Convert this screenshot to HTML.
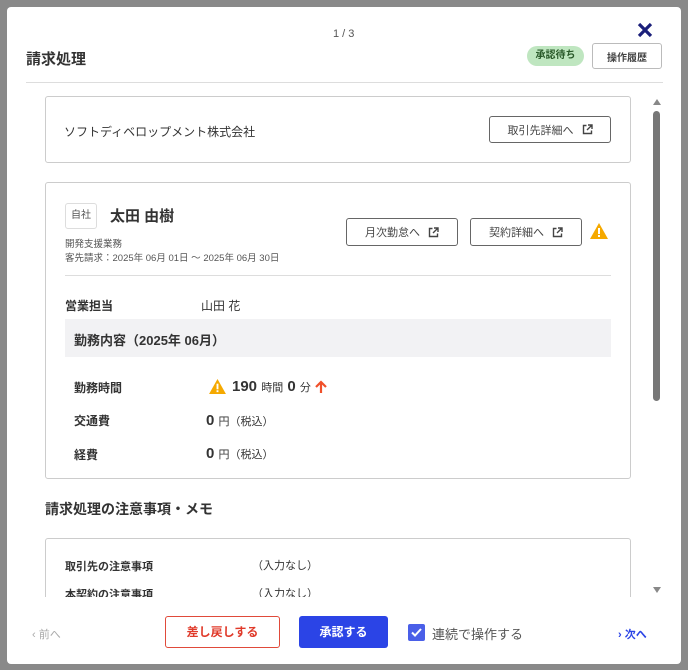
<!DOCTYPE html>
<html><head><meta charset="utf-8"><style>
*{box-sizing:border-box;margin:0;padding:0}
body{width:688px;height:670px;background:#898989;font-family:"Liberation Sans","Noto Sans CJK JP",sans-serif;color:#333;position:relative;overflow:hidden}
.a{position:absolute}
.modal{left:7px;top:7px;width:674px;height:657px;background:#fff;border-radius:4px}
.btn{position:absolute;border:1px solid #666;border-radius:3px;background:#fff;font-size:11px;color:#444;display:flex;align-items:center;justify-content:center;gap:8px}
.box{position:absolute;border:1px solid #ccc;border-radius:3px;background:#fff}
.b{font-weight:bold}
</style></head><body>
<div class="a modal">
  <div class="a" style="left:326px;top:21px;font-size:11px;color:#555">1 / 3</div>
  <svg class="a" style="left:630px;top:15px" width="16" height="16" viewBox="0 0 16 16"><path d="M2 2L14 14M14 2L2 14" stroke="#1b1f7a" stroke-width="3.2"/></svg>
  <div class="a b" style="left:19px;top:41px;font-size:15px;color:#333">請求処理</div>
  <div class="a b" style="left:520px;top:39px;width:57px;height:20px;background:#bfe6c0;border-radius:10px;font-size:10px;color:#2a5a2a;text-align:center;line-height:20px">承認待ち</div>
  <div class="btn b" style="left:585px;top:36px;width:70px;height:26px;border-color:#bbb;font-size:10px">操作履歴</div>
  <div class="a" style="left:19px;top:75px;width:637px;height:1px;background:#ddd"></div>

  <div class="a" style="left:0;top:83px;width:674px;height:507px;overflow:hidden">
    <div class="box" style="left:38px;top:6px;width:586px;height:67px"></div>
    <div class="a" style="left:57px;top:33px;font-size:12px">ソフトディベロップメント株式会社</div>
    <div class="btn" style="left:482px;top:26px;width:122px;height:27px">取引先詳細へ <svg width="11" height="11" viewBox="0 0 11 11"><path d="M4.5 1.5H1.5V9.5H9.5V6.5M6 1H10V5M10 1L5 6" stroke="#444" stroke-width="1.4" fill="none"/></svg></div>

    <div class="box" style="left:38px;top:92px;width:586px;height:297px"></div>
    <div class="a" style="left:58px;top:113px;width:32px;height:26px;border:1px solid #ddd;border-radius:3px;font-size:10px;text-align:center;line-height:24px;color:#555">自社</div>
    <div class="a b" style="left:103px;top:115px;font-size:15px">太田 由樹</div>
    <div class="a" style="left:58px;top:146px;font-size:9.5px;color:#555">開発支援業務</div>
    <div class="a" style="left:58px;top:160px;font-size:9.5px;color:#555">客先請求：2025年 06月 01日 ～ 2025年 06月 30日</div>
    <div class="btn" style="left:339px;top:128px;width:112px;height:28px">月次勤怠へ <svg width="11" height="11" viewBox="0 0 11 11"><path d="M4.5 1.5H1.5V9.5H9.5V6.5M6 1H10V5M10 1L5 6" stroke="#444" stroke-width="1.4" fill="none"/></svg></div>
    <div class="btn" style="left:463px;top:128px;width:112px;height:28px">契約詳細へ <svg width="11" height="11" viewBox="0 0 11 11"><path d="M4.5 1.5H1.5V9.5H9.5V6.5M6 1H10V5M10 1L5 6" stroke="#444" stroke-width="1.4" fill="none"/></svg></div>
    <svg class="a" style="left:583px;top:133px" width="18" height="16" viewBox="0 0 18 16"><path d="M9 0L18 16H0Z" fill="#f5a900"/><rect x="8" y="5" width="2" height="6" fill="#fff"/><rect x="8" y="12" width="2" height="2" fill="#fff"/></svg>
    <div class="a" style="left:58px;top:185px;width:546px;height:1px;background:#ddd"></div>
    <div class="a b" style="left:58px;top:207px;font-size:12px">営業担当</div>
    <div class="a" style="left:194px;top:207px;font-size:12px">山田 花</div>
    <div class="a" style="left:58px;top:229px;width:546px;height:38px;background:#f2f2f4"></div>
    <div class="a b" style="left:67px;top:240px;font-size:13px">勤務内容（2025年 06月）</div>
    <div class="a b" style="left:67px;top:289px;font-size:12px">勤務時間</div>
    <svg class="a" style="left:202px;top:289px" width="17" height="15" viewBox="0 0 18 16"><path d="M9 0L18 16H0Z" fill="#f5a900"/><rect x="8" y="5" width="2" height="6" fill="#fff"/><rect x="8" y="12" width="2" height="2" fill="#fff"/></svg>
    <div class="a" style="left:225px;top:288px;font-size:15px;color:#333"><b>190</b> <span style="font-size:11px">時間</span> <b>0</b> <span style="font-size:11px">分</span></div>
    <svg class="a" style="left:307px;top:290px" width="14" height="14" viewBox="0 0 14 14"><path d="M7 13V2M2 7L7 2L12 7" stroke="#f0502a" stroke-width="2.2" fill="none"/></svg>
    <div class="a b" style="left:67px;top:322px;font-size:12px">交通費</div>
    <div class="a" style="left:199px;top:322px;font-size:15px"><b>0</b> <span style="font-size:11px">円（税込）</span></div>
    <div class="a b" style="left:67px;top:356px;font-size:12px">経費</div>
    <div class="a" style="left:199px;top:355px;font-size:15px"><b>0</b> <span style="font-size:11px">円（税込）</span></div>

    <div class="a b" style="left:38px;top:409px;font-size:14px">請求処理の注意事項・メモ</div>
    <div class="box" style="left:38px;top:448px;width:586px;height:100px"></div>
    <div class="a b" style="left:58px;top:468px;font-size:11px">取引先の注意事項</div>
    <div class="a" style="left:245px;top:467px;font-size:11px">（入力なし）</div>
    <div class="a b" style="left:58px;top:496px;font-size:11px">本契約の注意事項</div>
    <div class="a" style="left:245px;top:495px;font-size:11px">（入力なし）</div>
  </div>
  <div class="a" style="left:646px;top:92px;width:0;height:0;border-left:4px solid transparent;border-right:4px solid transparent;border-bottom:6px solid #888"></div>
  <div class="a" style="left:646px;top:104px;width:7px;height:290px;background:#777;border-radius:4px"></div>
  <div class="a" style="left:646px;top:580px;width:0;height:0;border-left:4px solid transparent;border-right:4px solid transparent;border-top:6px solid #888"></div>

  <div class="a" style="left:25px;top:619px;font-size:11px;color:#aaa">‹ 前へ</div>
  <div class="a b" style="left:158px;top:609px;width:115px;height:32px;border:1px solid #e04a3a;border-radius:3px;color:#e03a2a;font-size:12px;text-align:center;line-height:30px">差し戻しする</div>
  <div class="a b" style="left:292px;top:609px;width:89px;height:32px;background:#2b44e6;border-radius:3px;color:#fff;font-size:12px;text-align:center;line-height:32px">承認する</div>
  <div class="a" style="left:401px;top:617px;width:17px;height:17px;background:#4a5fe8;border-radius:2px"><svg width="17" height="17" viewBox="0 0 17 17"><path d="M4 8.5L7 11.5L13 5" stroke="#fff" stroke-width="2" fill="none"/></svg></div>
  <div class="a" style="left:425px;top:617px;font-size:13px;color:#555">連続で操作する</div>
  <div class="a b" style="left:611px;top:619px;font-size:11px;color:#2b44e6">› 次へ</div>
</div>
</body></html>
